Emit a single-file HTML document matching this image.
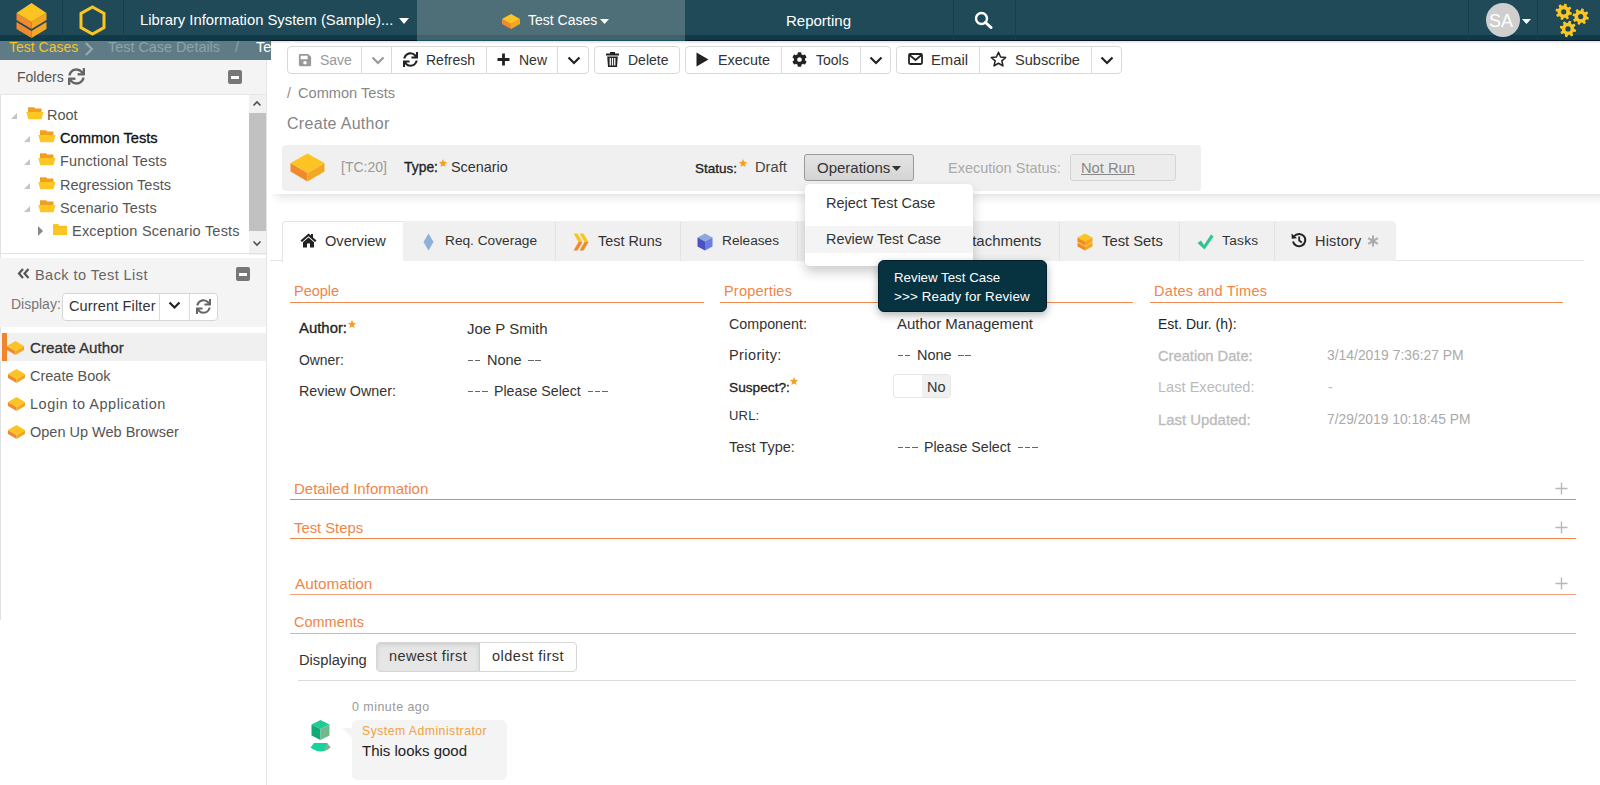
<!DOCTYPE html>
<html><head><meta charset="utf-8">
<style>
*{box-sizing:border-box;margin:0;padding:0}
html,body{width:1600px;height:785px;overflow:hidden;background:#fff;font-family:"Liberation Sans",sans-serif;color:#333;font-size:14.5px}
.a{position:absolute;white-space:nowrap;line-height:1}
.ab{position:absolute}
#hdr{position:absolute;left:0;top:0;width:1600px;height:41px;background:#204a58;border-bottom:6px solid #103a47}
.sep{position:absolute;top:0;width:1px;height:40px;background:#163e4c}
#bc{position:absolute;left:0;top:41px;width:271px;height:19px;background:#5f7c86}
#left{position:absolute;left:0;top:60px;width:267px;height:725px;border-right:1px solid #e4e4e4;background:#fff}
.btn{position:absolute;top:46px;height:28px;border:1px solid #d9d9d9;border-radius:4px;background:#fff}
.dv{position:absolute;top:0;width:1px;height:26px;background:#dcdcdc}
.sec{position:absolute;color:#ef8a4a;font-size:14.5px}
.ln{position:absolute;height:1px;background:#f0a070}
.lbl{color:#333}
</style></head><body>
<div id="hdr">
  <svg class="ab" style="left:16px;top:2px" width="31" height="37" viewBox="0 0 31 37">
    <polygon points="0.5,20 15.5,29 15.5,36 0.5,27" fill="#f08a2c"/>
    <polygon points="15.5,29 30.5,20 30.5,27 15.5,36" fill="#f5a623"/>
    <polygon points="0.5,11 15.5,20 15.5,27 0.5,18" fill="#f08a2c"/>
    <polygon points="15.5,20 30.5,11 30.5,18 15.5,27" fill="#f5a623"/>
    <polygon points="15.5,1 30.5,11 15.5,20 0.5,11" fill="#fcc423"/>
  </svg>
  <div class="sep" style="left:62px"></div>
  <svg class="ab" style="left:79px;top:5px" width="27" height="31" viewBox="0 0 27 31"><polygon points="13.5,2 25,8.5 25,22.5 13.5,29 2,22.5 2,8.5" fill="none" stroke="#f9c623" stroke-width="3"/></svg>
  <div class="sep" style="left:123px"></div>
  <div class="a" style="left:140px;top:13px;font-size:14.8px;color:#fff">Library Information System (Sample)...</div>
  <svg class="ab" style="left:399px;top:18px" width="10" height="6" viewBox="0 0 10 6"><polygon points="0,0 10,0 5,6" fill="#fff"/></svg>
  <div class="ab" style="left:417px;top:0;width:268px;height:35px;background:#4e6f78"></div>
  <div class="ab" style="left:417px;top:35px;width:268px;height:5px;background:#40636b"></div>
  <svg class="ab" style="left:502px;top:13px" width="18" height="16" viewBox="0 0 18 16">
    <polygon points="0,6 9,11 9,16 0,11" fill="#f08a2c"/><polygon points="9,11 18,6 18,11 9,16" fill="#f5a623"/><polygon points="9,1 18,6 9,11 0,6" fill="#fcc423"/></svg>
  <div class="a" style="left:528px;top:13px;font-size:14px;color:#fff">Test Cases</div>
  <svg class="ab" style="left:600px;top:19px" width="9" height="5" viewBox="0 0 9 5"><polygon points="0,0 9,0 4.5,5" fill="#fff"/></svg>
  <div class="a" style="left:786px;top:13px;font-size:15px;color:#fff">Reporting</div>
  <div class="sep" style="left:953px"></div>
  <svg class="ab" style="left:974px;top:11px" width="19" height="18" viewBox="0 0 19 18"><circle cx="7.5" cy="7.5" r="5.5" fill="none" stroke="#fff" stroke-width="2.4"/><line x1="11.5" y1="11.5" x2="17" y2="16.5" stroke="#fff" stroke-width="3" stroke-linecap="round"/></svg>
  <div class="sep" style="left:1015px"></div>
  <div class="sep" style="left:1468px"></div>
  <div class="ab" style="left:1486px;top:3px;width:34px;height:34px;border-radius:50%;background:#cfcfcf"></div>
  <div class="a" style="left:1489px;top:12px;font-size:18px;color:#fff">SA</div>
  <svg class="ab" style="left:1522px;top:19px" width="9" height="5" viewBox="0 0 9 5"><polygon points="0,0 9,0 4.5,5" fill="#fff"/></svg>
  <div class="sep" style="left:1537px"></div>
  <svg class="ab" style="left:1552px;top:2px" width="40" height="38" viewBox="0 0 40 38"><g fill="#f9c623" stroke="#1a4352" stroke-width="1.2" paint-order="stroke" fill-rule="evenodd"><path d="M22.20,26.90 L24.26,27.68 L23.67,30.08 L21.48,29.80 L20.38,31.28 L21.29,33.30 L19.18,34.57 L17.82,32.83 L16.00,33.10 L15.22,35.16 L12.82,34.57 L13.10,32.38 L11.62,31.28 L9.60,32.19 L8.33,30.08 L10.07,28.72 L9.80,26.90 L7.74,26.12 L8.33,23.72 L10.52,24.00 L11.62,22.52 L10.71,20.50 L12.82,19.23 L14.18,20.97 L16.00,20.70 L16.78,18.64 L19.18,19.23 L18.90,21.42 L20.38,22.52 L22.40,21.61 L23.67,23.72 L21.93,25.08Z M18.60,26.90 A2.6,2.6 0 1,0 13.40,26.90 A2.6,2.6 0 1,0 18.60,26.90Z"/><path d="M34.90,14.60 L36.96,15.38 L36.37,17.78 L34.18,17.50 L33.08,18.98 L33.99,21.00 L31.88,22.27 L30.52,20.53 L28.70,20.80 L27.92,22.86 L25.52,22.27 L25.80,20.08 L24.32,18.98 L22.30,19.89 L21.03,17.78 L22.77,16.42 L22.50,14.60 L20.44,13.82 L21.03,11.42 L23.22,11.70 L24.32,10.22 L23.41,8.20 L25.52,6.93 L26.88,8.67 L28.70,8.40 L29.48,6.34 L31.88,6.93 L31.60,9.12 L33.08,10.22 L35.10,9.31 L36.37,11.42 L34.63,12.78Z M31.30,14.60 A2.6,2.6 0 1,0 26.10,14.60 A2.6,2.6 0 1,0 31.30,14.60Z"/><path d="M17.90,9.80 L19.96,10.58 L19.37,12.98 L17.18,12.70 L16.08,14.18 L16.99,16.20 L14.88,17.47 L13.52,15.73 L11.70,16.00 L10.92,18.06 L8.52,17.47 L8.80,15.28 L7.32,14.18 L5.30,15.09 L4.03,12.98 L5.77,11.62 L5.50,9.80 L3.44,9.02 L4.03,6.62 L6.22,6.90 L7.32,5.42 L6.41,3.40 L8.52,2.13 L9.88,3.87 L11.70,3.60 L12.48,1.54 L14.88,2.13 L14.60,4.32 L16.08,5.42 L18.10,4.51 L19.37,6.62 L17.63,7.98Z M14.30,9.80 A2.6,2.6 0 1,0 9.10,9.80 A2.6,2.6 0 1,0 14.30,9.80Z"/></g></svg>
</div>
<div class="ab" style="left:271px;top:40px;width:1329px;height:1px;background:#041628"></div><div class="ab" style="left:417px;top:40px;width:268px;height:1px;background:#1c5560"></div><div class="ab" style="left:0;top:40px;width:271px;height:1px;background:#0b3844"></div>
<div class="ab" style="left:271px;top:41px;width:1329px;height:3px;background:linear-gradient(rgba(0,0,0,0.13),rgba(0,0,0,0))"></div>
<div id="bc">
  <div class="a" style="left:9px;top:-1px;font-size:14px;color:#f5c324">Test Cases</div>
  <svg class="ab" style="left:84px;top:1px" width="10" height="14" viewBox="0 0 10 14"><polyline points="1.8,1 8,7 1.8,13" fill="none" stroke="#98abb0" stroke-width="2"/></svg>
  <div class="a" style="left:108px;top:-1px;font-size:14.4px;color:#8da3aa">Test Case Details</div>
  <div class="a" style="left:235px;top:-1px;font-size:14px;color:#8da3aa">/</div>
  <div class="a" style="left:256px;top:-1px;font-size:14.4px;color:#fff">Test Cases</div>
</div>
<div id="left">
  <div class="ab" style="left:0;top:0;width:266px;height:35px;background:#f4f4f4;border-bottom:1px solid #e6e6e6"></div>
  <div class="a" style="left:17px;top:10px;font-size:14px;color:#555">Folders</div>
  <svg class="ab" style="left:68px;top:8px" width="17" height="17" viewBox="0 0 512 512"><path fill="#666" d="M440.65 12.57l4 82.77A247.16 247.16 0 0 0 255.83 8C134.73 8 33.91 94.92 12.29 209.82A12 12 0 0 0 24.09 224h49.05a12 12 0 0 0 11.67-9.26 175.91 175.91 0 0 1 317-56.94l-101.46-4.86a12 12 0 0 0-12.57 12v47.41a12 12 0 0 0 12 12H500a12 12 0 0 0 12-12V12a12 12 0 0 0-12-12h-47.37a12 12 0 0 0-11.98 12.57zM255.83 432a175.61 175.61 0 0 1-146-77.8l101.8 4.87a12 12 0 0 0 12.57-12v-47.4a12 12 0 0 0-12-12H12a12 12 0 0 0-12 12V500a12 12 0 0 0 12 12h47.35a12 12 0 0 0 12-12.6l-4.15-82.57A247.17 247.17 0 0 0 255.83 504c121.11 0 221.93-86.92 243.55-201.82a12 12 0 0 0-11.8-14.18h-49.05a12 12 0 0 0-11.67 9.26A175.86 175.86 0 0 1 255.83 432z"/></svg>
  <div class="ab" style="left:228px;top:10px;width:14px;height:14px;border-radius:2px;background:#777"><div class="ab" style="left:3px;top:6px;width:8px;height:2.5px;background:#fff"></div></div>
  <!-- tree -->
  <div class="ab" style="left:249px;top:35px;width:17px;height:160px;background:#f1f1f1"></div>
  <div class="ab" style="left:249px;top:53px;width:17px;height:118px;background:#c1c1c1"></div>
  <svg class="ab" style="left:252px;top:40px" width="10" height="7" viewBox="0 0 10 7"><polyline points="1.5,5.5 5,2 8.5,5.5" fill="none" stroke="#505050" stroke-width="1.6"/></svg>
  <svg class="ab" style="left:252px;top:180px" width="10" height="7" viewBox="0 0 10 7"><polyline points="1.5,1.5 5,5 8.5,1.5" fill="none" stroke="#505050" stroke-width="1.6"/></svg>
  <div class="ab" style="left:0;top:35px;width:1px;height:525px;background:#e2e2e2"></div><div class="ab" style="left:0;top:193px;width:266px;height:1px;background:#e2e2e2"></div>
  <svg class="ab" style="left:10px;top:52px" width="8" height="8" viewBox="0 0 8 8"><polygon points="7,1 7,7 1,7" fill="#c4c4c4"/></svg>
<svg class="ab" style="left:26px;top:47px" width="18" height="13" viewBox="0 0 18 13"><path d="M2,0.3 L8,0.3 L9.5,1.6 L15.5,1.6 L15.5,7 L2,7Z" fill="#f0a020"/><path d="M0.3,5 L17.5,5 L15.5,12.3 L2.3,12.3Z" fill="#fcc723"/></svg>
<div class="a" style="left:47px;top:48px;font-size:14.5px;color:#555">Root</div>
<svg class="ab" style="left:23px;top:75px" width="8" height="8" viewBox="0 0 8 8"><polygon points="7,1 7,7 1,7" fill="#c4c4c4"/></svg>
<svg class="ab" style="left:38px;top:70px" width="18" height="13" viewBox="0 0 18 13"><path d="M2,0.3 L8,0.3 L9.5,1.6 L15.5,1.6 L15.5,7 L2,7Z" fill="#f0a020"/><path d="M0.3,5 L17.5,5 L15.5,12.3 L2.3,12.3Z" fill="#fcc723"/></svg>
<div class="a" style="left:60px;top:70.6px;font-size:14.7px;color:#111;-webkit-text-stroke:0.3px #111">Common Tests</div>
<svg class="ab" style="left:23px;top:98px" width="8" height="8" viewBox="0 0 8 8"><polygon points="7,1 7,7 1,7" fill="#c4c4c4"/></svg>
<svg class="ab" style="left:38px;top:93px" width="18" height="13" viewBox="0 0 18 13"><path d="M2,0.3 L8,0.3 L9.5,1.6 L15.5,1.6 L15.5,7 L2,7Z" fill="#f0a020"/><path d="M0.3,5 L17.5,5 L15.5,12.3 L2.3,12.3Z" fill="#fcc723"/></svg>
<div class="a" style="left:60px;top:94px;font-size:14.5px;color:#555;letter-spacing:0.15px">Functional Tests</div>
<svg class="ab" style="left:23px;top:122px" width="8" height="8" viewBox="0 0 8 8"><polygon points="7,1 7,7 1,7" fill="#c4c4c4"/></svg>
<svg class="ab" style="left:38px;top:117px" width="18" height="13" viewBox="0 0 18 13"><path d="M2,0.3 L8,0.3 L9.5,1.6 L15.5,1.6 L15.5,7 L2,7Z" fill="#f0a020"/><path d="M0.3,5 L17.5,5 L15.5,12.3 L2.3,12.3Z" fill="#fcc723"/></svg>
<div class="a" style="left:60px;top:118px;font-size:14.5px;color:#555">Regression Tests</div>
<svg class="ab" style="left:23px;top:145px" width="8" height="8" viewBox="0 0 8 8"><polygon points="7,1 7,7 1,7" fill="#c4c4c4"/></svg>
<svg class="ab" style="left:38px;top:140px" width="18" height="13" viewBox="0 0 18 13"><path d="M2,0.3 L8,0.3 L9.5,1.6 L15.5,1.6 L15.5,7 L2,7Z" fill="#f0a020"/><path d="M0.3,5 L17.5,5 L15.5,12.3 L2.3,12.3Z" fill="#fcc723"/></svg>
<div class="a" style="left:60px;top:141px;font-size:14.5px;color:#555;letter-spacing:0.15px">Scenario Tests</div>
<svg class="ab" style="left:37px;top:166px" width="7" height="10" viewBox="0 0 7 10"><polygon points="1,0 6,5 1,10" fill="#888"/></svg>
<svg class="ab" style="left:53px;top:163.5px" width="14" height="11.5" viewBox="0 0 15 12" preserveAspectRatio="none"><path d="M0,0.5 Q0,0 0.5,0 L5.5,0 L7,1.8 L14.5,1.8 Q15,1.8 15,2.3 L15,11.5 Q15,12 14.5,12 L0.5,12 Q0,12 0,11.5Z" fill="#fcc622"/><rect x="0" y="2.6" width="15" height="1" fill="#f5b81c"/></svg>
<div class="a" style="left:72px;top:164px;font-size:14.5px;color:#555;letter-spacing:0.22px">Exception Scenario Tests</div>

  <!-- back to list -->
  <div class="ab" style="left:0;top:198px;width:266px;height:69px;background:#f4f4f4"></div>
  <svg class="ab" style="left:17px;top:208px" width="13" height="11" viewBox="0 0 13 11"><polyline points="6,1 2,5.5 6,10" fill="none" stroke="#555" stroke-width="2.2"/><polyline points="11.5,1 7.5,5.5 11.5,10" fill="none" stroke="#555" stroke-width="2.2"/></svg>
  <div class="a" style="left:35px;top:207.5px;font-size:14.5px;color:#666;letter-spacing:0.45px">Back to Test List</div>
  <div class="ab" style="left:236px;top:207px;width:14px;height:14px;border-radius:2px;background:#777"><div class="ab" style="left:3px;top:6px;width:8px;height:2.5px;background:#fff"></div></div>
  <div class="a" style="left:11px;top:237px;font-size:14px;color:#777">Display:</div>
  <div class="ab" style="left:62px;top:233px;width:156px;height:28px;border:1px solid #d6d6d6;border-radius:4px;background:#fff"></div>
  <div class="ab" style="left:159px;top:234px;width:1px;height:26px;background:#ddd"></div>
  <div class="ab" style="left:189px;top:234px;width:1px;height:26px;background:#ddd"></div>
  <div class="a" style="left:69px;top:239px;font-size:14.5px;color:#333;letter-spacing:0.15px">Current Filter</div>
  <svg class="ab" style="left:168px;top:241px" width="13" height="9" viewBox="0 0 13 9"><polyline points="1.5,1.5 6.5,6.5 11.5,1.5" fill="none" stroke="#222" stroke-width="2.2"/></svg>
  <svg class="ab" style="left:196px;top:239px" width="15" height="15" viewBox="0 0 512 512"><path fill="#666" d="M440.65 12.57l4 82.77A247.16 247.16 0 0 0 255.83 8C134.73 8 33.91 94.92 12.290 209.82A12 12 0 0 0 24.09 224h49.05a12 12 0 0 0 11.67-9.26 175.91 175.91 0 0 1 317-56.94l-101.46-4.86a12 12 0 0 0-12.57 12v47.41a12 12 0 0 0 12 12H500a12 12 0 0 0 12-12V12a12 12 0 0 0-12-12h-47.37a12 12 0 0 0-11.980 12.57zM255.83 432a175.610 175.610 0 0 1-146-77.8l101.8 4.87a12 12 0 0 0 12.57-12v-47.4a12 12 0 0 0-12-12H12a12 12 0 0 0-12 12V500a12 12 0 0 0 12 12h47.35a12 12 0 0 0 12-12.6l-4.15-82.57A247.17 247.17 0 0 0 255.830 504c121.11 0 221.93-86.92 243.55-201.82a12 12 0 0 0-11.8-14.18h-49.05a12 12 0 0 0-11.67 9.26A175.86 175.86 0 0 1 255.83 432z"/></svg>
  <!-- list -->
  <div class="ab" style="left:0;top:273px;width:266px;height:28px;background:#f0f0f0"></div>
  <div class="ab" style="left:2px;top:273px;width:5px;height:28px;background:#f0852d"></div>
  <svg class="ab" style="left:7px;top:281px" width="17" height="14" viewBox="0 0 17 14"><polygon points="0,5 8.5,10 8.5,14 0,9" fill="#f08a2c"/><polygon points="8.5,10 17,5 17,9 8.5,14" fill="#f5a623"/><polygon points="8.5,0 17,5 8.5,10 0,5" fill="#fcc423"/></svg>
<div class="a" style="left:30px;top:280.1px;font-size:15.2px;color:#333;-webkit-text-stroke:0.3px #333">Create Author</div>
<svg class="ab" style="left:8px;top:309px" width="17" height="14" viewBox="0 0 17 14"><polygon points="0,5 8.5,10 8.5,14 0,9" fill="#f08a2c"/><polygon points="8.5,10 17,5 17,9 8.5,14" fill="#f5a623"/><polygon points="8.5,0 17,5 8.5,10 0,5" fill="#fcc423"/></svg>
<div class="a" style="left:30px;top:309px;font-size:14.5px;color:#555">Create Book</div>
<svg class="ab" style="left:8px;top:337px" width="17" height="14" viewBox="0 0 17 14"><polygon points="0,5 8.5,10 8.5,14 0,9" fill="#f08a2c"/><polygon points="8.5,10 17,5 17,9 8.5,14" fill="#f5a623"/><polygon points="8.5,0 17,5 8.5,10 0,5" fill="#fcc423"/></svg>
<div class="a" style="left:30px;top:337px;font-size:14.5px;color:#555;letter-spacing:0.5px">Login to Application</div>
<svg class="ab" style="left:8px;top:365px" width="17" height="14" viewBox="0 0 17 14"><polygon points="0,5 8.5,10 8.5,14 0,9" fill="#f08a2c"/><polygon points="8.5,10 17,5 17,9 8.5,14" fill="#f5a623"/><polygon points="8.5,0 17,5 8.5,10 0,5" fill="#fcc423"/></svg>
<div class="a" style="left:30px;top:365px;font-size:14.5px;color:#555">Open Up Web Browser</div>

</div>
<div class="btn" style="left:287px;width:105px;border-radius:4px 0 0 4px"><div class="dv" style="left:73px"></div></div>
<svg class="ab" style="left:298px;top:53px" width="14" height="14" viewBox="0 0 448 512"><path fill="#999" d="M433.941 129.941l-83.882-83.882A48 48 0 0 0 316.118 32H48C21.49 32 0 53.49 0 80v352c0 26.51 21.49 48 48 48h352c26.51 0 48-21.49 48-48V163.882a48 48 0 0 0-14.059-33.941zM224 416c-35.346 0-64-28.654-64-64 0-35.346 28.654-64 64-64s64 28.654 64 64c0 35.346-28.654 64-64 64zm96-304.52V212c0 6.627-5.373 12-12 12H76c-6.627 0-12-5.373-12-12V108c0-6.627 5.373-12 12-12h228.52c3.183 0 6.235 1.264 8.485 3.515l3.48 3.48A11.996 11.996 0 0 1 320 111.48z"/></svg>
<div class="a" style="left:320px;top:53.1px;font-size:14px;color:#999;">Save</div>
<svg class="ab" style="left:371px;top:56px" width="14" height="9" viewBox="0 0 14 9"><polyline points="1.5,1.5 7,7 12.5,1.5" fill="none" stroke="#999" stroke-width="2.2"/></svg>
<div class="btn" style="left:391px;width:198px;border-radius:0 4px 4px 0"><div class="dv" style="left:94px"></div><div class="dv" style="left:165px"></div></div>
<svg class="ab" style="left:403px;top:52px" width="15" height="15" viewBox="0 0 512 512"><path fill="#222" d="M440.65 12.57l4 82.77A247.16 247.16 0 0 0 255.83 8C134.73 8 33.91 94.92 12.29 209.82A12 12 0 0 0 24.09 224h49.05a12 12 0 0 0 11.67-9.26 175.91 175.91 0 0 1 317-56.94l-101.46-4.86a12 12 0 0 0-12.570 12v47.41a12 12 0 0 0 12 12H500a12 12 0 0 0 12-12V12a12 12 0 0 0-12-12h-47.37a12 12 0 0 0-11.98 12.57zM255.83 432a175.61 175.61 0 0 1-146-77.8l101.8 4.87a12 12 0 0 0 12.57-12v-47.4a12 12 0 0 0-12-12H12a12 12 0 0 0-12 12V500a12 12 0 0 0 12 12h47.35a12 12 0 0 0 12-12.6l-4.15-82.57A247.17 247.17 0 0 0 255.83 504c121.11 0 221.93-86.92 243.55-201.82a12 12 0 0 0-11.8-14.18h-49.05a12 12 0 0 0-11.67 9.26A175.86 175.86 0 0 1 255.83 432z"/></svg>
<div class="a" style="left:426px;top:53.1px;font-size:14px;color:#333;">Refresh</div>
<svg class="ab" style="left:497px;top:53px" width="13" height="13" viewBox="0 0 13 13"><path d="M6.5,0.5 V12.5 M0.5,6.5 H12.5" stroke="#222" stroke-width="2.8"/></svg>
<div class="a" style="left:519px;top:53.1px;font-size:14px;color:#333;">New</div>
<svg class="ab" style="left:567px;top:56px" width="14" height="9" viewBox="0 0 14 9"><polyline points="1.5,1.5 7,7 12.5,1.5" fill="none" stroke="#222" stroke-width="2.2"/></svg>
<div class="btn" style="left:594px;width:86px"></div>
<svg class="ab" style="left:606px;top:52px" width="13" height="15" viewBox="0 0 13 15"><rect x="0" y="1.5" width="13" height="2" fill="#222"/><rect x="4" y="0" width="5" height="2" fill="#222"/><path d="M1.2,4.5 H11.8 L11,15 H2Z" fill="#222"/><rect x="3.6" y="6" width="1.3" height="7.5" fill="#fff"/><rect x="5.85" y="6" width="1.3" height="7.5" fill="#fff"/><rect x="8.1" y="6" width="1.3" height="7.5" fill="#fff"/></svg>
<div class="a" style="left:628px;top:53.1px;font-size:14px;color:#333;">Delete</div>
<div class="btn" style="left:685px;width:206px"><div class="dv" style="left:95px"></div><div class="dv" style="left:174px"></div></div>
<svg class="ab" style="left:696px;top:52px" width="13" height="15" viewBox="0 0 13 15"><polygon points="0.5,0.5 12.5,7.5 0.5,14.5" fill="#222"/></svg>
<div class="a" style="left:718px;top:52.8px;font-size:14.4px;color:#333;">Execute</div>
<svg class="ab" style="left:792px;top:52px" width="15" height="15" viewBox="0 0 512 512"><path fill="#222" d="M487.4 315.7l-42.6-24.6c4.3-23.2 4.3-47 0-70.2l42.6-24.6c4.9-2.8 7.1-8.6 5.5-14-11.1-35.6-30-67.8-54.7-94.6-3.8-4.1-10-5.1-14.8-2.3L380.8 110c-17.9-15.4-38.5-27.3-60.8-35.1V25.8c0-5.6-3.9-10.5-9.4-11.7-36.7-8.2-74.3-7.8-109.2 0-5.5 1.2-9.4 6.1-9.4 11.7V75c-22.2 7.9-42.8 19.8-60.8 35.1L88.7 85.5c-4.9-2.8-11-1.9-14.8 2.3-24.7 26.7-43.6 58.9-54.7 94.6-1.7 5.4.6 11.2 5.5 14L67.3 221c-4.3 23.2-4.3 47 0 70.2l-42.6 24.6c-4.9 2.8-7.1 8.6-5.5 14 11.1 35.6 30 67.8 54.7 94.6 3.8 4.1 10 5.1 14.8 2.3l42.6-24.6c17.9 15.4 38.5 27.3 60.8 35.1v49.2c0 5.6 3.9 10.5 9.4 11.7 36.7 8.2 74.3 7.8 109.2 0 5.5-1.2 9.4-6.1 9.4-11.7v-49.2c22.2-7.9 42.8-19.8 60.8-35.1l42.6 24.6c4.9 2.8 11 1.9 14.8-2.3 24.7-26.7 43.6-58.9 54.7-94.6 1.5-5.5-.7-11.3-5.6-14.1zM256 336c-44.1 0-80-35.9-80-80s35.9-80 80-80 80 35.9 80 80-35.9 80-80 80z"/></svg>
<div class="a" style="left:816px;top:53.1px;font-size:14px;color:#333;">Tools</div>
<svg class="ab" style="left:869px;top:56px" width="14" height="9" viewBox="0 0 14 9"><polyline points="1.5,1.5 7,7 12.5,1.5" fill="none" stroke="#222" stroke-width="2.2"/></svg>
<div class="btn" style="left:896px;width:226px"><div class="dv" style="left:82px"></div><div class="dv" style="left:194px"></div></div>
<svg class="ab" style="left:908px;top:53px" width="15" height="12" viewBox="0 0 15 12"><rect x="1" y="1" width="13" height="10" rx="1.2" fill="none" stroke="#222" stroke-width="1.8"/><polyline points="1.5,2 7.5,7 13.5,2" fill="none" stroke="#222" stroke-width="1.8"/></svg>
<div class="a" style="left:931px;top:52.5px;font-size:14.8px;color:#333;">Email</div>
<svg class="ab" style="left:990px;top:51px" width="17" height="16" viewBox="0 0 24 23"><polygon points="12,1.8 15,8.6 22.4,9.3 16.8,14.2 18.4,21.4 12,17.6 5.6,21.4 7.2,14.2 1.6,9.3 9,8.6" fill="none" stroke="#222" stroke-width="2.2" stroke-linejoin="round"/></svg>
<div class="a" style="left:1015px;top:52.6px;font-size:14.6px;color:#333;">Subscribe</div>
<svg class="ab" style="left:1100px;top:56px" width="14" height="9" viewBox="0 0 14 9"><polyline points="1.5,1.5 7,7 12.5,1.5" fill="none" stroke="#222" stroke-width="2.2"/></svg>
<div class="a" style="left:287px;top:86px;font-size:14px;color:#888;">/</div>
<div class="a" style="left:298px;top:85.6px;font-size:14.6px;color:#888;">Common Tests</div>
<div class="a" style="left:287px;top:115.5px;font-size:16px;color:#858585;letter-spacing:0.3px">Create Author</div>
<div class="ab" style="left:270px;top:194px;width:1330px;height:11px;background:linear-gradient(rgba(0,0,0,0.09),rgba(0,0,0,0.03) 50%,rgba(0,0,0,0));-webkit-mask-image:linear-gradient(to right,transparent,#000 12px)"></div>
<div class="ab" style="left:282px;top:145px;width:919px;height:46px;background:#f0f0f0;border-radius:4px"></div>
<svg class="ab" style="left:290px;top:153px" width="35" height="29" viewBox="0 0 35 29"><polygon points="0.5,10 17.5,20 17.5,28.5 0.5,18.5" fill="#f08a2c"/><polygon points="17.5,20 34.5,10 34.5,18.5 17.5,28.5" fill="#f5a623"/><polygon points="17.5,0.5 34.5,10 17.5,20 0.5,10" fill="#fcc423"/></svg>
<div class="a" style="left:341px;top:160.1px;font-size:14px;color:#999;">[TC:20]</div>
<div class="a" style="left:404px;top:161.2px;font-size:13.9px;color:#222;-webkit-text-stroke:0.3px #222">Type:</div>
<svg class="ab" style="left:439px;top:159px" width="8" height="8" viewBox="0 0 8 8"><polygon points="4.00,0.10 5.18,2.78 8.09,3.07 5.90,5.02 6.53,7.88 4.00,6.40 1.47,7.88 2.10,5.02 -0.09,3.07 2.82,2.78" fill="#f5a020"/></svg>
<div class="a" style="left:451px;top:159.8px;font-size:14.4px;color:#333;">Scenario</div>
<div class="a" style="left:695px;top:161.6px;font-size:13.5px;color:#222;-webkit-text-stroke:0.3px #222">Status:</div>
<svg class="ab" style="left:739px;top:159px" width="8" height="8" viewBox="0 0 8 8"><polygon points="4.00,0.10 5.18,2.78 8.09,3.07 5.90,5.02 6.53,7.88 4.00,6.40 1.47,7.88 2.10,5.02 -0.09,3.07 2.82,2.78" fill="#f5a020"/></svg>
<div class="a" style="left:755px;top:159.6px;font-size:14.7px;color:#444;">Draft</div>
<div class="ab" style="left:804px;top:154px;width:110px;height:27px;background:linear-gradient(#e4e4e4,#d4d4d4);border:1px solid #999;border-radius:3px"></div>
<div class="a" style="left:817px;top:160.3px;font-size:15px;color:#333;">Operations</div>
<svg class="ab" style="left:892px;top:166px" width="9" height="5" viewBox="0 0 9 5"><polygon points="0,0 9,0 4.5,5" fill="#333"/></svg>
<div class="a" style="left:948px;top:160.7px;font-size:14.5px;color:#aaa;">Execution Status:</div>
<div class="ab" style="left:1070px;top:154px;width:106px;height:27px;background:#ececec;border:1px solid #d4d4d4;border-radius:3px"></div>
<div class="a" style="left:1081px;top:160.6px;font-size:14.7px;color:#888;text-decoration:underline">Not Run</div>
<div class="ab" style="left:270px;top:260px;width:1314px;height:1px;background:#e6e6e6"></div>
<div class="ab" style="left:403px;top:221px;width:993px;height:40px;background:#f0f0f0;border-radius:0 4px 0 0"></div>
<div class="ab" style="left:555px;top:221px;width:1px;height:40px;background:#e2e2e2"></div>
<div class="ab" style="left:680px;top:221px;width:1px;height:40px;background:#e2e2e2"></div>
<div class="ab" style="left:797px;top:221px;width:1px;height:40px;background:#e2e2e2"></div>
<div class="ab" style="left:913px;top:221px;width:1px;height:40px;background:#e2e2e2"></div>
<div class="ab" style="left:1059px;top:221px;width:1px;height:40px;background:#e2e2e2"></div>
<div class="ab" style="left:1179px;top:221px;width:1px;height:40px;background:#e2e2e2"></div>
<div class="ab" style="left:1274px;top:221px;width:1px;height:40px;background:#e2e2e2"></div>
<div class="ab" style="left:282px;top:221px;width:121px;height:41px;background:#fff;border:1px solid #e4e4e4;border-bottom:none;border-right:none;border-radius:4px 0 0 0"></div>
<svg class="ab" style="left:300px;top:233px" width="17" height="15" viewBox="0 0 17 15"><polygon points="8.5,0.5 0.5,7.5 2,9 8.5,3.3 15,9 16.5,7.5 13,4.4 13,1 11,1 11,2.6" fill="#222"/><polygon points="8.5,4.5 3,9.3 3,14.5 7,14.5 7,10.5 10,10.5 10,14.5 14,14.5 14,9.3" fill="#222"/></svg>
<div class="a" style="left:325px;top:233.6px;font-size:14.6px;color:#333;">Overview</div>
<svg class="ab" style="left:423px;top:233px" width="11" height="18" viewBox="0 0 11 18"><polygon points="5.5,0.5 10.5,9 5.5,17.5 0.5,9" fill="#8fb0d8"/></svg>
<div class="a" style="left:445px;top:234.4px;font-size:13.7px;color:#333;letter-spacing:0px">Req. Coverage</div>
<svg class="ab" style="left:573px;top:233px" width="17" height="18" viewBox="0 0 17 18"><polygon points="0.5,0.5 4.5,0.5 9.5,9 5.5,9" fill="#fcc423"/><polygon points="5.5,9 9.5,9 4.5,17.5 0.5,17.5" fill="#f08a2c"/><polygon points="6.5,0.5 10.5,0.5 15.5,9 11.5,9" fill="#fcc423"/><polygon points="11.5,9 15.5,9 10.5,17.5 6.5,17.5" fill="#f08a2c"/></svg>
<div class="a" style="left:598px;top:233.8px;font-size:14.4px;color:#333;">Test Runs</div>
<svg class="ab" style="left:697px;top:233px" width="16" height="18" viewBox="0 0 16 18"><polygon points="8,0.5 15.5,4.5 8,8.5 0.5,4.5" fill="#8fa8dc"/><polygon points="0.5,4.5 8,8.5 8,17.5 0.5,13.5" fill="#4b50c2"/><polygon points="8,8.5 15.5,4.5 15.5,13.5 8,17.5" fill="#6c7ce0"/></svg>
<div class="a" style="left:722px;top:234.4px;font-size:13.7px;color:#333;letter-spacing:0px">Releases</div>
<div class="a" style="left:958px;top:233.3px;font-size:15px;color:#333;">Attachments</div>
<svg class="ab" style="left:1077px;top:233px" width="16" height="18" viewBox="0 0 16 18"><polygon points="0.5,9.5 8,13.5 8,17.5 0.5,13.5" fill="#f08a2c"/><polygon points="8,13.5 15.5,9.5 15.5,13.5 8,17.5" fill="#f5a623"/><polygon points="8,5.5 15.5,9.5 8,13.5 0.5,9.5" fill="#fcc423"/><polygon points="0.5,4.5 8,8.5 8,12.5 0.5,8.5" fill="#f08a2c"/><polygon points="8,8.5 15.5,4.5 15.5,8.5 8,12.5" fill="#f5a623"/><polygon points="8,0.5 15.5,4.5 8,8.5 0.5,4.5" fill="#fcc423"/></svg>
<div class="a" style="left:1102px;top:233.5px;font-size:14.8px;color:#333;">Test Sets</div>
<svg class="ab" style="left:1197px;top:234px" width="17" height="16" viewBox="0 0 17 16"><path d="M0.5,9 L4,6.5 L7,11 L14,0.5 L16.5,2.5 L7.5,15.5Z" fill="#2cc68e"/></svg>
<div class="a" style="left:1222px;top:234.4px;font-size:13.7px;color:#333;letter-spacing:0.3px">Tasks</div>
<svg class="ab" style="left:1291px;top:232px" width="16" height="16" viewBox="0 0 16 16"><path d="M3.2,4.2 A6.2,6.2 0 1,1 2,9.5" fill="none" stroke="#222" stroke-width="2"/><polygon points="0.5,1.5 6,6.2 0.8,6.8" fill="#222"/><polyline points="8.2,4.5 8.2,8.5 10.8,10.5" fill="none" stroke="#222" stroke-width="1.8"/></svg>
<div class="a" style="left:1315px;top:233.7px;font-size:14.5px;color:#333;letter-spacing:0.2px">History</div>
<svg class="ab" style="left:1367px;top:235px" width="12" height="12" viewBox="0 0 12 12"><g stroke="#aaa" stroke-width="2"><line x1="6" y1="0.5" x2="6" y2="11.5"/><line x1="1.2" y1="3.2" x2="10.8" y2="8.8"/><line x1="1.2" y1="8.8" x2="10.8" y2="3.2"/></g></svg>
<div class="a" style="left:294px;top:283.7px;font-size:14.5px;color:#ef8548;">People</div><div class="ab" style="left:290px;top:302px;width:414px;height:1px;background:#f08a50"></div>
<div class="a" style="left:724px;top:283.7px;font-size:14.5px;color:#ef8548;letter-spacing:0.2px">Properties</div><div class="ab" style="left:720px;top:302px;width:413px;height:1px;background:#f08a50"></div>
<div class="a" style="left:1154px;top:283.7px;font-size:14.5px;color:#ef8548;letter-spacing:0.3px">Dates and Times</div><div class="ab" style="left:1150px;top:302px;width:413px;height:1px;background:#f08a50"></div>
<div class="a" style="left:299px;top:321.4px;font-size:14.9px;color:#222;-webkit-text-stroke:0.3px #222">Author:</div>
<svg class="ab" style="left:348px;top:320px" width="8" height="8" viewBox="0 0 8 8"><polygon points="4.00,0.10 5.18,2.78 8.09,3.07 5.90,5.02 6.53,7.88 4.00,6.40 1.47,7.88 2.10,5.02 -0.09,3.07 2.82,2.78" fill="#f5a020"/></svg>
<div class="a" style="left:467px;top:321.3px;font-size:15px;color:#333;">Joe P Smith</div>
<div class="a" style="left:299px;top:353.9px;font-size:13.9px;color:#333;">Owner:</div>
<div class="ab" style="left:467.5px;top:360px;width:5.5px;height:1.3px;background:#666"></div><div class="ab" style="left:474.8px;top:360px;width:5.5px;height:1.3px;background:#666"></div><div class="a" style="left:487px;top:352.7px;font-size:14.5px;color:#333">None</div><div class="ab" style="left:528.0px;top:360px;width:5.5px;height:1.3px;background:#666"></div><div class="ab" style="left:535.3px;top:360px;width:5.5px;height:1.3px;background:#666"></div>
<div class="a" style="left:299px;top:383.9px;font-size:14.3px;color:#333;">Review Owner:</div>
<div class="ab" style="left:467.5px;top:391px;width:5.5px;height:1.3px;background:#666"></div><div class="ab" style="left:474.8px;top:391px;width:5.5px;height:1.3px;background:#666"></div><div class="ab" style="left:482.1px;top:391px;width:5.5px;height:1.3px;background:#666"></div><div class="a" style="left:494px;top:383.7px;font-size:14.2px;color:#333;letter-spacing:0px">Please Select</div><div class="ab" style="left:587.5px;top:391px;width:5.5px;height:1.3px;background:#666"></div><div class="ab" style="left:594.8px;top:391px;width:5.5px;height:1.3px;background:#666"></div><div class="ab" style="left:602.1px;top:391px;width:5.5px;height:1.3px;background:#666"></div>
<div class="a" style="left:729px;top:316.9px;font-size:14.3px;color:#333;">Component:</div>
<div class="a" style="left:897px;top:316.3px;font-size:15px;color:#333;">Author Management</div>
<div class="a" style="left:729px;top:347.7px;font-size:14.5px;color:#333;letter-spacing:0.4px">Priority:</div>
<div class="ab" style="left:897.5px;top:355px;width:5.5px;height:1.3px;background:#666"></div><div class="ab" style="left:904.8px;top:355px;width:5.5px;height:1.3px;background:#666"></div><div class="a" style="left:917px;top:347.7px;font-size:14.5px;color:#333">None</div><div class="ab" style="left:958.0px;top:355px;width:5.5px;height:1.3px;background:#666"></div><div class="ab" style="left:965.3px;top:355px;width:5.5px;height:1.3px;background:#666"></div>
<div class="a" style="left:729px;top:381px;font-size:13.7px;color:#222;-webkit-text-stroke:0.3px #222">Suspect?:</div>
<svg class="ab" style="left:790px;top:377px" width="8" height="8" viewBox="0 0 8 8"><polygon points="4.00,0.10 5.18,2.78 8.09,3.07 5.90,5.02 6.53,7.88 4.00,6.40 1.47,7.88 2.10,5.02 -0.09,3.07 2.82,2.78" fill="#f5a020"/></svg>
<div class="ab" style="left:893px;top:374px;width:58px;height:24px;border:1px solid #e6e6e6;border-radius:3px;background:#fff"><div class="ab" style="left:28px;top:0;width:28px;height:22px;background:#f0f0f0"></div></div>
<div class="a" style="left:927px;top:379.7px;font-size:14.5px;color:#333;">No</div>
<div class="a" style="left:729px;top:409.0px;font-size:13px;color:#333;letter-spacing:0.2px">URL:</div>
<div class="a" style="left:729px;top:439.7px;font-size:14.5px;color:#333;">Test Type:</div>
<div class="ab" style="left:897.5px;top:447px;width:5.5px;height:1.3px;background:#666"></div><div class="ab" style="left:904.8px;top:447px;width:5.5px;height:1.3px;background:#666"></div><div class="ab" style="left:912.1px;top:447px;width:5.5px;height:1.3px;background:#666"></div><div class="a" style="left:924px;top:439.7px;font-size:14.2px;color:#333;letter-spacing:0px">Please Select</div><div class="ab" style="left:1017.5px;top:447px;width:5.5px;height:1.3px;background:#666"></div><div class="ab" style="left:1024.8px;top:447px;width:5.5px;height:1.3px;background:#666"></div><div class="ab" style="left:1032.1px;top:447px;width:5.5px;height:1.3px;background:#666"></div>
<div class="a" style="left:1158px;top:317.1px;font-size:14px;color:#222;">Est. Dur. (h):</div>
<div class="a" style="left:1158px;top:348.6px;font-size:14.7px;color:#bbb;-webkit-text-stroke:0.3px #bbb">Creation Date:</div>
<div class="a" style="left:1327px;top:349.2px;font-size:13.9px;color:#aaa;">3/14/2019 7:36:27 PM</div>
<div class="a" style="left:1158px;top:379.6px;font-size:14.6px;color:#bbb;">Last Executed:</div>
<div class="a" style="left:1328px;top:380.1px;font-size:14px;color:#bbb;">-</div>
<div class="a" style="left:1158px;top:412.6px;font-size:14.9px;color:#bbb;-webkit-text-stroke:0.3px #bbb">Last Updated:</div>
<div class="a" style="left:1327px;top:412.5px;font-size:13.8px;color:#aaa;">7/29/2019 10:18:45 PM</div>
<div class="a" style="left:294px;top:481.3px;font-size:15px;color:#ef8548;">Detailed Information</div><div class="ab" style="left:290px;top:499px;width:1286px;height:1px;background:#f08548"></div>
<svg class="ab" style="left:1555px;top:482px" width="13" height="13" viewBox="0 0 13 13"><path d="M6.5,0.5 V12.5 M0.5,6.5 H12.5" stroke="#b4b8bc" stroke-width="1.4"/></svg>
<div class="a" style="left:294px;top:520.5px;font-size:14.8px;color:#ef8548;">Test Steps</div><div class="ab" style="left:290px;top:538px;width:1286px;height:1px;background:#f08548"></div>
<svg class="ab" style="left:1555px;top:521px" width="13" height="13" viewBox="0 0 13 13"><path d="M6.5,0.5 V12.5 M0.5,6.5 H12.5" stroke="#b4b8bc" stroke-width="1.4"/></svg>
<div class="a" style="left:295px;top:576.0px;font-size:15.3px;color:#ef8548;">Automation</div><div class="ab" style="left:290px;top:594px;width:1286px;height:1px;background:#f4a07c"></div>
<svg class="ab" style="left:1555px;top:577px" width="13" height="13" viewBox="0 0 13 13"><path d="M6.5,0.5 V12.5 M0.5,6.5 H12.5" stroke="#b4b8bc" stroke-width="1.4"/></svg>
<div class="a" style="left:294px;top:614.7px;font-size:14.5px;color:#ef8548;">Comments</div><div class="ab" style="left:290px;top:633px;width:1286px;height:1px;background:#f6ae92"></div>
<div class="a" style="left:299px;top:652.6px;font-size:14.7px;color:#333;">Displaying</div>
<div class="ab" style="left:376px;top:642px;width:201px;height:30px;border:1px solid #d6d6d6;border-radius:4px;background:#fff;overflow:hidden"><div class="ab" style="left:0;top:0;width:103px;height:28px;background:#e6e6e6;border-right:1px solid #cfcfcf;box-shadow:inset 0 2px 4px rgba(0,0,0,0.1)"></div></div>
<div class="a" style="left:389px;top:648.7px;font-size:14.5px;color:#333;letter-spacing:0.4px">newest first</div>
<div class="a" style="left:492px;top:648.7px;font-size:14.5px;color:#333;letter-spacing:0.5px">oldest first</div>
<div class="ab" style="left:298px;top:680px;width:1278px;height:1px;background:#dcdcdc"></div>
<div class="a" style="left:352px;top:700.5px;font-size:12.4px;color:#999;letter-spacing:0.5px">0 minute ago</div>
<svg class="ab" style="left:310px;top:719px" width="21" height="33" viewBox="0 0 21 33"><polygon points="10.5,1 19.5,5.5 10.5,10 1.5,5.5" fill="#1fcb94"/><polygon points="1.5,5.5 10.5,10 10.5,21 1.5,16.5" fill="#12a878"/><polygon points="10.5,10 19.5,5.5 19.5,16.5 10.5,21" fill="#70bb8b"/><path d="M0.5,28.5 L4,24 L17,24 L20.5,28.5 Q15,32.5 10.5,32.5 Q6,32.5 0.5,28.5Z" fill="#14d49b"/><path d="M13.5,32.3 L17,24 L20.5,28.5 Q17,31.5 13.5,32.3Z" fill="#77b98d"/></svg>
<div class="ab" style="left:352px;top:720px;width:155px;height:60px;background:#f4f4f4;border-radius:6px"></div>
<svg class="ab" style="left:342px;top:728px" width="11" height="12" viewBox="0 0 11 12"><polygon points="0,0 11,0 11,11" fill="#f4f4f4"/></svg>
<div class="a" style="left:362px;top:724.7px;font-size:12.2px;color:#f0a040;letter-spacing:0.5px">System Administrator</div>
<div class="a" style="left:362px;top:743.3px;font-size:15px;color:#222;">This looks good</div>
<div class="ab" style="left:805px;top:184px;width:168px;height:82px;background:#fff;border-radius:5px;box-shadow:0 6px 12px rgba(0,0,0,0.2)"><div class="ab" style="left:0;top:42px;width:168px;height:27px;background:#f4f4f4"></div></div>
<div class="a" style="left:826px;top:195.7px;font-size:14.5px;color:#333;">Reject Test Case</div>
<div class="a" style="left:826px;top:231.8px;font-size:14.4px;color:#333;">Review Test Case</div>
<div class="ab" style="left:878px;top:260px;width:169px;height:52px;background:#07323f;border:1px solid #031e2b;border-radius:6px;box-shadow:0 3px 8px rgba(0,0,0,0.3)"></div>
<div class="a" style="left:894px;top:270.7px;font-size:13.3px;color:#fff;">Review Test Case</div>
<div class="a" style="left:894px;top:289.7px;font-size:13.4px;color:#fff;letter-spacing:0.15px">&gt;&gt;&gt; Ready for Review</div>
</body></html>
